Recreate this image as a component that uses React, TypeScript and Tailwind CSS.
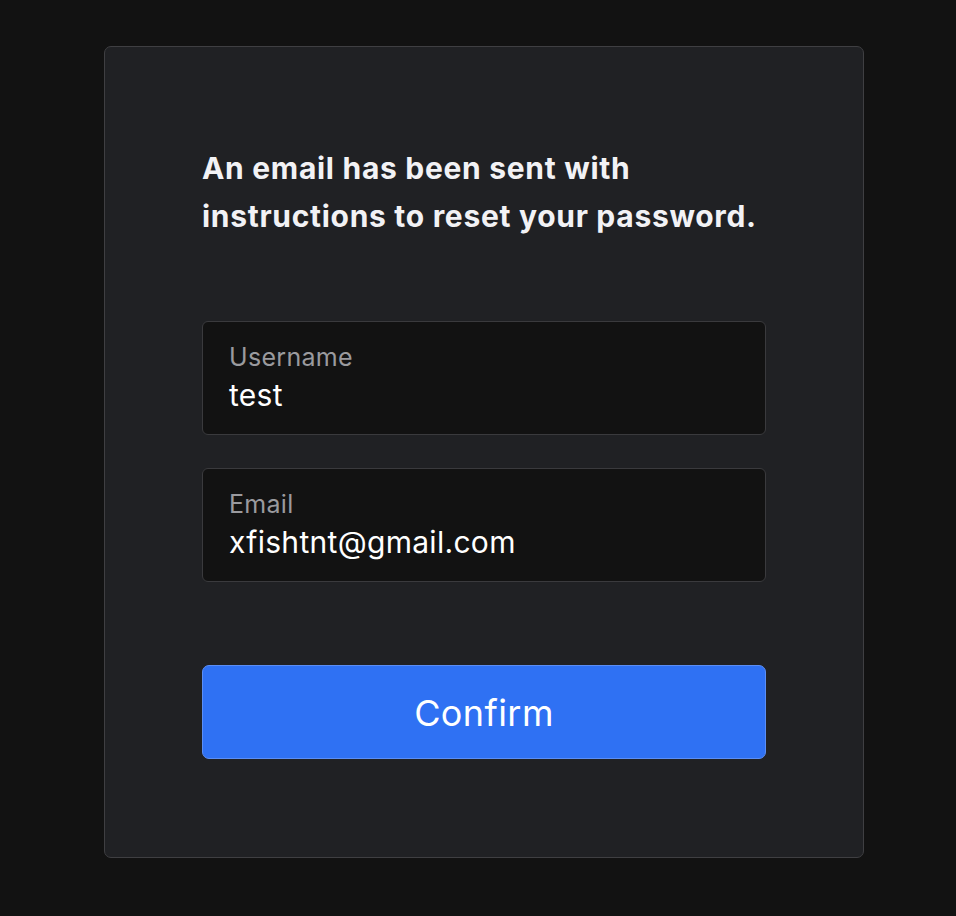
import React from "react";

export default function App() {
  return (
    <div
      className="min-h-[916px] w-full bg-[#121212] pt-[46px]"
      style={{ fontFamily: "Inter, 'Noto Sans', sans-serif" }}
    >
      <div className="ml-[104px] w-[760px] h-[812px] rounded-[7px] border border-[#3f3f42] bg-[#202124] px-[97px] pt-[97px]">
        <h1 className="text-[30px] font-bold leading-[48px] text-[#f2f2f5] tracking-[0.7px]">
          An email has been sent with
          <br />
          instructions to reset your password.
        </h1>
        <div className="mt-[81px] flex flex-col gap-[33px]">
          <div className="h-[114px] rounded-[6px] border border-[#3a3a3d] bg-[#121212] px-[26px] pt-[18px]">
            <div className="text-[25px] leading-[35px] tracking-[0.3px] text-[#9a9a9e]">Username</div>
            <div className="text-[30px] leading-[40px] tracking-[0.3px] text-white">test</div>
          </div>
          <div className="h-[114px] rounded-[6px] border border-[#3a3a3d] bg-[#121212] px-[26px] pt-[18px]">
            <div className="text-[25px] leading-[35px] tracking-[0.3px] text-[#9a9a9e]">Email</div>
            <div className="text-[30px] leading-[40px] tracking-[0.3px] text-white">xfishtnt@gmail.com</div>
          </div>
        </div>
        <button className="mt-[83px] flex h-[94px] w-full items-center justify-center rounded-[7px] border border-[#5b8ef5] bg-[#2f71f3] pt-[2px] text-[36px] tracking-[0.4px] text-white">
          Confirm
        </button>
      </div>
    </div>
  );
}
